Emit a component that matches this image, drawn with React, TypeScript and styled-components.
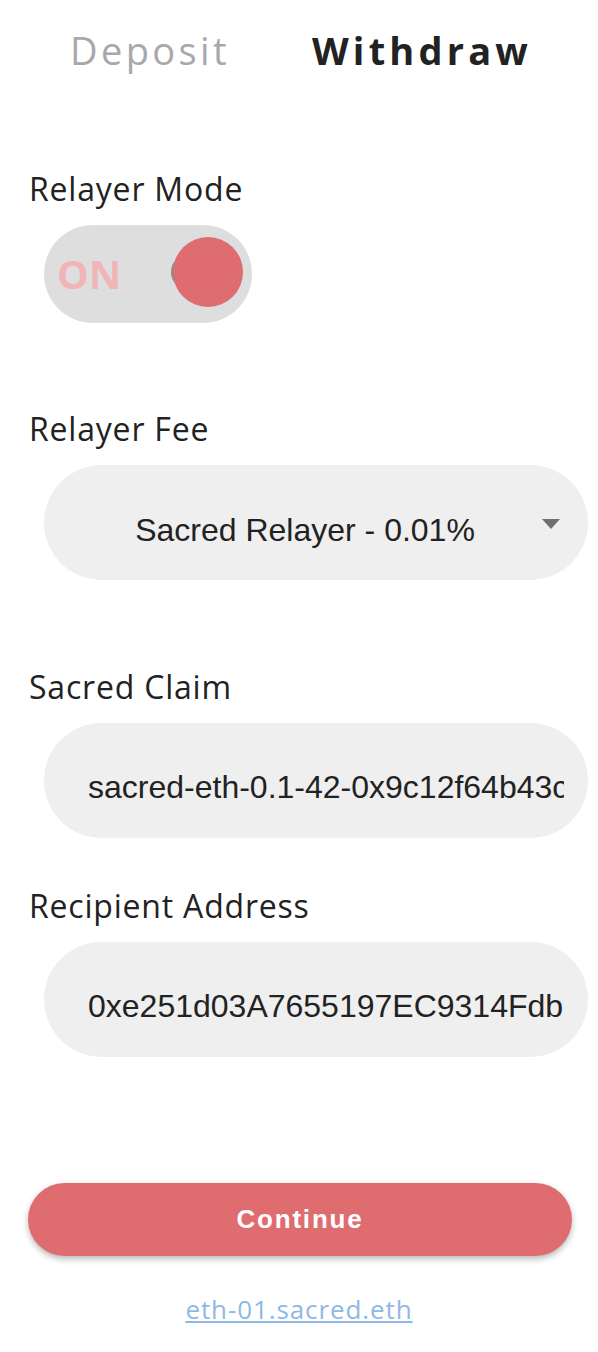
import React, { useState } from 'react'
import styled, { createGlobalStyle } from 'styled-components'

const GlobalStyle = createGlobalStyle`
  html, body {
    margin: 0;
    padding: 0;
    background: #fff;
  }
  body {
    font-family: 'Open Sans', 'Liberation Sans', sans-serif;
    color: #222;
  }
  * {
    box-sizing: border-box;
  }
`

const Page = styled.div`
  width: 598px;
  min-height: 1352px;
  overflow: hidden;
`

const Tabs = styled.nav`
  display: grid;
  grid-template-columns: 1fr 1fr;
  justify-items: center;
  padding: 27px 40px 0 14px;
`

const Tab = styled.button<{ $active?: boolean }>`
  border: 0;
  background: none;
  padding: 0;
  cursor: pointer;
  font-family: 'Open Sans', sans-serif;
  font-size: 38px;
  line-height: 46px;
  font-weight: ${(p) => (p.$active ? 700 : 400)};
  letter-spacing: ${(p) => (p.$active ? '4.2px' : '3.4px')};
  color: ${(p) => (p.$active ? '#222' : '#a8a8ab')};
`

const Form = styled.form`
  display: flex;
  flex-direction: column;
  padding: 0 28px;
`

const Field = styled.div<{ $space: number }>`
  display: flex;
  flex-direction: column;
  margin-top: ${(p) => p.$space}px;
`

const Label = styled.label`
  font-family: 'Open Sans', sans-serif;
  font-size: 32px;
  line-height: 40px;
  letter-spacing: 0.8px;
  padding-left: 1px;
  margin-bottom: 16px;
  color: #222;
`

const Switch = styled.button<{ $on: boolean }>`
  position: relative;
  display: flex;
  align-items: center;
  width: 208px;
  height: 98px;
  margin-left: 16px;
  padding: 0 0 0 13px;
  border: 0;
  border-radius: 49px;
  background: #dedede;
  cursor: pointer;
`

const SwitchText = styled.span`
  font-family: 'Open Sans', sans-serif;
  font-weight: 700;
  font-size: 40px;
  line-height: 40px;
  color: #f2b5b7;
`

const KnobWrap = styled.span`
  position: absolute;
  inset: 0;
  z-index: 0;
`

const Knob = styled.span`
  position: absolute;
  top: 12px;
  right: 9px;
  width: 70px;
  height: 70px;
  border-radius: 50%;
  background: #df6d70;

  &::before {
    content: '';
    position: absolute;
    z-index: -1;
    left: -2px;
    top: 17px;
    width: 36px;
    height: 36px;
    border-radius: 50%;
    background: #8a8a8a;
  }
`

const SelectBox = styled.div`
  position: relative;
  display: flex;
  align-items: center;
  justify-content: center;
  width: 544px;
  height: 115px;
  margin-left: 16px;
  padding: 16px 66px 0 44px;
  border-radius: 58px;
  background: #efefef;
  font-family: 'Liberation Sans', Arial, sans-serif;
  font-size: 32px;
  color: #222;
  cursor: pointer;
`

const Caret = styled.span`
  position: absolute;
  right: 28px;
  top: 54px;
  width: 0;
  height: 0;
  border-left: 9.5px solid transparent;
  border-right: 9.5px solid transparent;
  border-top: 10px solid #707070;
`

const TextInput = styled.input`
  width: 544px;
  height: 115px;
  margin-left: 16px;
  padding: 14px 24px 0 44px;
  border: 0;
  border-radius: 58px;
  background: #efefef;
  outline: none;
  font-family: 'Liberation Sans', Arial, sans-serif;
  font-size: 32px;
  color: #222;
`

const ContinueButton = styled.button`
  width: 544px;
  height: 73px;
  margin-top: 126px;
  border: 0;
  border-radius: 37px;
  background: #df6d6f;
  box-shadow: 0 3px 6px rgba(0, 0, 0, 0.28);
  color: #fff;
  font-family: 'Liberation Sans', Arial, sans-serif;
  font-weight: 700;
  font-size: 26px;
  letter-spacing: 1.8px;
  cursor: pointer;
`

const Footer = styled.div`
  display: flex;
  justify-content: center;
  margin-top: 37px;
`

const EnsLink = styled.a`
  font-family: 'Open Sans', sans-serif;
  font-size: 26px;
  line-height: 32px;
  letter-spacing: 0.9px;
  color: #8fb8e6;
  text-decoration: underline;
`

const App = () => {
  const [tab, setTab] = useState('withdraw')
  const [relayer, setRelayer] = useState(true)

  return (
    <Page>
      <GlobalStyle />
      <Tabs>
        <Tab $active={tab === 'deposit'} onClick={() => setTab('deposit')}>
          Deposit
        </Tab>
        <Tab $active={tab === 'withdraw'} onClick={() => setTab('withdraw')}>
          Withdraw
        </Tab>
      </Tabs>

      <Form onSubmit={(e) => e.preventDefault()}>
        <Field $space={96}>
          <Label>Relayer Mode</Label>
          <Switch type="button" $on={relayer} onClick={() => setRelayer(!relayer)}>
            <SwitchText>ON</SwitchText>
            <KnobWrap>
              <Knob />
            </KnobWrap>
          </Switch>
        </Field>

        <Field $space={86}>
          <Label>Relayer Fee</Label>
          <SelectBox>
            Sacred Relayer - 0.01%
            <Caret />
          </SelectBox>
        </Field>

        <Field $space={87}>
          <Label>Sacred Claim</Label>
          <TextInput readOnly value="sacred-eth-0.1-42-0x9c12f64b43c8e1a07d52f9b0e3a6c41d87f2b95e" />
        </Field>

        <Field $space={48}>
          <Label>Recipient Address</Label>
          <TextInput readOnly value="0xe251d03A7655197EC9314FdbB1b8eD33cE0a2c1F" />
        </Field>

        <ContinueButton type="submit">Continue</ContinueButton>

        <Footer>
          <EnsLink href="#">eth-01.sacred.eth</EnsLink>
        </Footer>
      </Form>
    </Page>
  )
}

export default App
